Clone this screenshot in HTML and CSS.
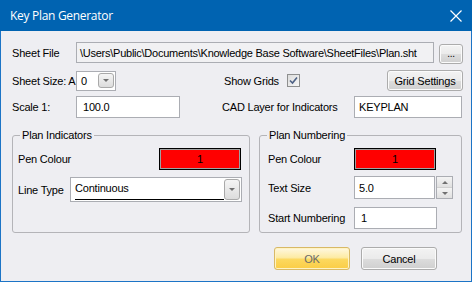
FILE: index.html
```html
<!DOCTYPE html>
<html>
  <head>
    <title>Key Plan Generator</title>
    <link rel="stylesheet" href="styles.css">
  </head>
  <body>
    <div class="window">
      <div class="titlebar">
        <span class="title">Key Plan Generator</span>
        <svg class="close" width="12" height="12" viewBox="0 0 12 12">
          <path d="M0.5 0.5L11.5 11.5M11.5 0.5L0.5 11.5" stroke="#fff" stroke-width="1.2" />
        </svg>
      </div>
      <div class="content">
        <div class="row row-file">
          <span class="lbl lbl-main">Sheet File</span>
          <div class="textbox readonly file-box">\Users\Public\Documents\Knowledge Base Software\SheetFiles\Plan.sht</div>
          <button class="btn dots-btn">...</button>
        </div>
        <div class="row row-size">
          <span class="lbl lbl-main">Sheet Size: A</span>
          <div class="combo size-combo">
            <span class="combo-text">0</span>
            <span class="drop-btn"><span class="arrow-down"></span></span>
          </div>
          <span class="lbl lbl-grids">Show Grids</span>
          <span class="checkbox">
            <svg width="9" height="9" viewBox="0 0 9 9">
              <path d="M1 4.5L3.5 7L8 1.5" fill="none" stroke="#4d6185" stroke-width="1.6" />
            </svg>
          </span>
          <button class="btn grid-btn">Grid Settings</button>
        </div>
        <div class="row row-scale">
          <span class="lbl lbl-main">Scale 1:</span>
          <div class="textbox scale-box">100.0</div>
          <span class="lbl lbl-layer">CAD Layer for Indicators</span>
          <div class="textbox layer-box">KEYPLAN</div>
        </div>
        <div class="groups">
          <fieldset class="group group-ind">
            <legend>Plan Indicators</legend>
            <div class="grow grow-pen">
              <span class="lbl">Pen Colour</span>
              <div class="pen ind-pen">1</div>
            </div>
            <div class="grow grow-line">
              <span class="lbl">Line Type</span>
              <div class="combo line-combo">
                <span class="combo-text line-text">Continuous</span>
                <span class="drop-btn"><span class="arrow-down"></span></span>
              </div>
            </div>
          </fieldset>
          <fieldset class="group group-num">
            <legend>Plan Numbering</legend>
            <div class="grow grow-pen">
              <span class="lbl lbl-num">Pen Colour</span>
              <div class="pen">1</div>
            </div>
            <div class="grow grow-size">
              <span class="lbl lbl-num">Text Size</span>
              <div class="textbox size-box">5.0</div>
              <div class="spinner">
                <span class="spin"><span class="arrow-up"></span></span>
                <span class="spin"><span class="arrow-down"></span></span>
              </div>
            </div>
            <div class="grow grow-start">
              <span class="lbl lbl-num">Start Numbering</span>
              <div class="textbox start-box">1</div>
            </div>
          </fieldset>
        </div>
        <div class="actions">
          <button class="btn btn-ok">OK</button>
          <button class="btn btn-cancel">Cancel</button>
        </div>
      </div>
    </div>
  </body>
</html>
```

FILE: styles.css
```css
* {
  margin: 0;
  padding: 0;
  box-sizing: border-box;
}

body {
  width: 472px;
  height: 282px;
  overflow: hidden;
  font-family: "Liberation Sans", Arial, sans-serif;
  font-size: 11px;
  letter-spacing: -0.2px;
  color: #000;
}

.window {
  width: 472px;
  height: 282px;
  border: 1px solid #1c74c6;
  border-top: 0;
  background-color: #eeeef2;
}

.titlebar {
  height: 31px;
  margin: 0 -1px;
  background-color: #0063b1;
  color: #fff;
  display: flex;
  align-items: center;
  padding-left: 10px;
}
.title {
  font-family: "Open Sans", "Noto Sans", sans-serif;
  font-size: 12px;
  letter-spacing: -0.3px;
}
.close {
  margin-left: auto;
  margin-right: 10px;
}

.content {
  padding: 11px 0 0 11px;
}

.row {
  display: flex;
  align-items: center;
}
.lbl {
  white-space: nowrap;
}
.lbl-main {
  width: 64px;
}

.textbox {
  height: 22px;
  background-color: #fff;
  border: 1px solid #abadb3;
  padding: 0 3px;
  display: flex;
  align-items: center;
  white-space: nowrap;
  overflow: hidden;
}
.readonly {
  background-color: #f1f1f3;
}

.btn {
  font-family: "Liberation Sans", Arial, sans-serif;
  font-size: 11px;
  letter-spacing: -0.2px;
  color: #000;
  border: 1px solid #acacac;
  border-radius: 3px;
  background: linear-gradient(#f3f3f3 0%, #ebebeb 50%, #dddddd 51%, #cfcfcf 100%);
  box-shadow: inset 0 0 0 1px #fbfbfb;
}

/* row 1 */
.row-file {
  height: 21px;
}
.file-box {
  width: 358px;
  height: 21px;
  padding-left: 3px;
  letter-spacing: -0.25px;
}
.dots-btn {
  width: 24px;
  height: 20px;
  margin-left: 5px;
  margin-top: 2px;
  line-height: 12px;
  font-size: 10px;
}

/* row 2 */
.row-size {
  height: 21px;
  margin-top: 7px;
}
.combo {
  height: 20px;
  background-color: #fff;
  border: 1px solid #abadb3;
  display: flex;
  align-items: center;
  padding-left: 4px;
  padding-right: 1px;
}
.size-combo {
  width: 40px;
}
.combo-text {
  flex: 1;
}
.drop-btn {
  width: 16px;
  height: 15px;
  border: 1px solid #a9a9a9;
  border-radius: 3px;
  background: linear-gradient(#f5f5f5, #dcdcdc);
  display: flex;
  align-items: center;
  justify-content: center;
}
.arrow-down {
  width: 0;
  height: 0;
  border-left: 3px solid transparent;
  border-right: 3px solid transparent;
  border-top: 3px solid #707070;
}
.arrow-up {
  width: 0;
  height: 0;
  border-left: 3px solid transparent;
  border-right: 3px solid transparent;
  border-bottom: 3px solid #707070;
}
.lbl-grids {
  margin-left: 108px;
  width: 63px;
}
.checkbox {
  width: 13px;
  height: 13px;
  border: 1px solid #8e8f8f;
  background: linear-gradient(135deg, #dcdcdc, #f6f6f6);
  display: flex;
  align-items: center;
  justify-content: center;
}
.grid-btn {
  width: 76px;
  height: 21px;
  margin-left: 87px;
}

/* row 3 */
.row-scale {
  height: 22px;
  margin-top: 5px;
}
.scale-box {
  width: 104px;
  padding-left: 6px;
}
.lbl-layer {
  margin-left: 42px;
  width: 132px;
}
.layer-box {
  width: 108px;
  padding-left: 4px;
}

/* groups */
.groups {
  display: flex;
  margin-top: 11px;
}
.group {
  height: 104px;
  border: 1px solid #b4b4b8;
  border-radius: 3px;
  padding: 0;
}
.group legend {
  margin-left: 7px;
  padding: 0 2px;
  line-height: 13px;
}
.group-ind {
  width: 238px;
}
.group-num {
  width: 203px;
  margin-left: 9px;
}
.grow {
  display: flex;
  align-items: center;
}
.grow-pen {
  height: 22px;
  margin-top: 6px;
}
.group-ind .grow {
  padding-left: 5px;
}
.group-ind .lbl {
  width: 141px;
}
.group-ind .grow-line .lbl {
  width: 52px;
}
.pen {
  width: 82px;
  height: 22px;
  background-color: #ff0000;
  border: 1px solid #000;
  box-shadow: 0 0 0 1px #a0a0a0 inset;
  display: flex;
  align-items: center;
  justify-content: center;
}
.grow-line {
  height: 25px;
  margin-top: 7px;
}
.line-combo {
  width: 172px;
  height: 25px;
  padding-left: 4px;
}
.line-combo .drop-btn {
  height: 21px;
}
.line-text {
  height: 20px;
  line-height: 17px;
  border-bottom: 1px solid #000;
}

.group-num .grow {
  padding-left: 8px;
}
.lbl-num {
  width: 86px;
}
.grow-size {
  height: 23px;
  margin-top: 6px;
}
.size-box {
  width: 81px;
  height: 23px;
  padding-left: 4px;
}
.spinner {
  width: 17px;
  height: 23px;
  margin-left: 1px;
  border: 1px solid #abadb3;
  display: flex;
  flex-direction: column;
}
.spin {
  flex: 1;
  background: linear-gradient(#f4f4f4, #e0e0e0);
  display: flex;
  align-items: center;
  justify-content: center;
}
.spin + .spin {
  border-top: 1px solid #d0d0d0;
}
.grow-start {
  height: 22px;
  margin-top: 8px;
}
.start-box {
  width: 83px;
  padding-left: 6px;
}

/* buttons */
.actions {
  display: flex;
  margin-top: 14px;
  padding-left: 262px;
}
.btn-ok,
.btn-cancel {
  width: 76px;
  height: 23px;
}
.btn-ok {
  color: #6a6a6a;
  border-color: #d8b966;
  background: linear-gradient(#fff8e0 0%, #fdeba4 45%, #fcd85e 55%, #fbcd45 100%);
  box-shadow: inset 0 0 0 1px #fff3c4;
}
.btn-cancel {
  margin-left: 11px;
}
```
